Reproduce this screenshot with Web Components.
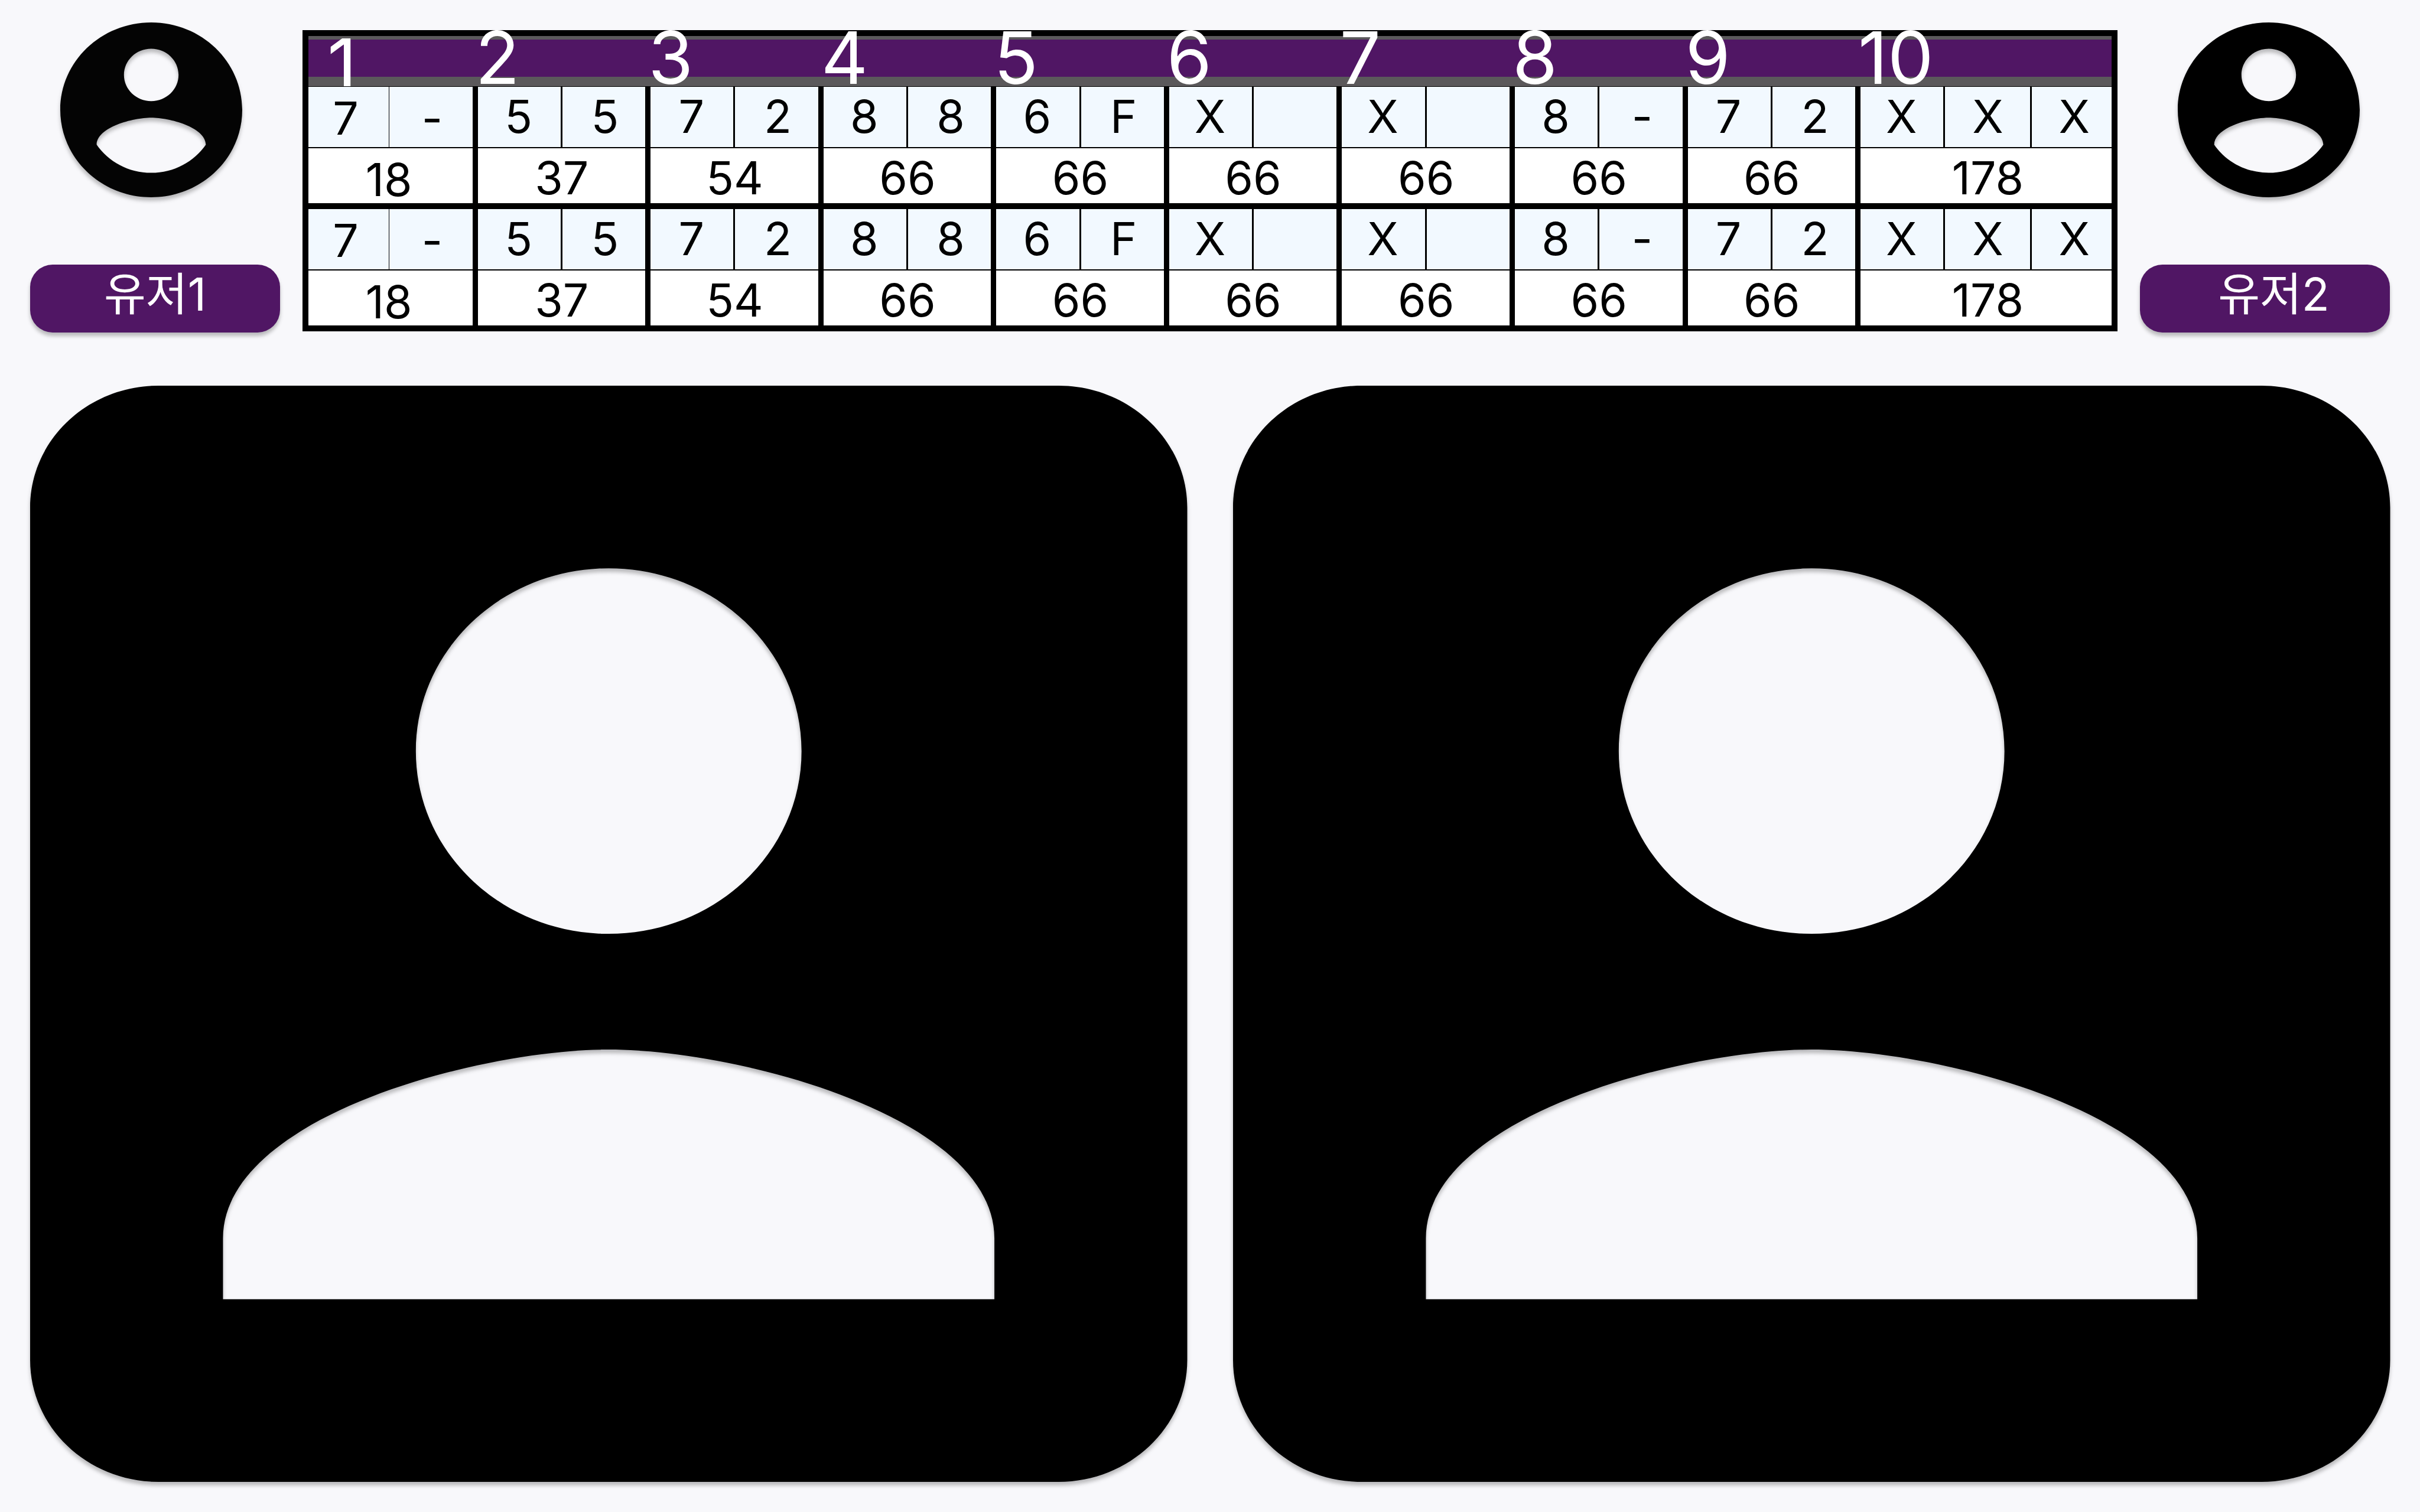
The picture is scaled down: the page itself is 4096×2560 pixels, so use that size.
<!DOCTYPE html>
<html lang="ko">
<head>
<meta charset="utf-8">
<title>볼링 스코어</title>
<style>
html,body{margin:0;background:#f8f8fb}
</style>
</head>
<body>
<bowling-match></bowling-match>
<script>
const define = (name, html, ready) => customElements.define(name, class extends HTMLElement {
  connectedCallback() {
    if (this.shadowRoot) return;
    this.attachShadow({ mode: 'open' }).innerHTML = html;
    if (ready) ready(this, this.shadowRoot);
  }
});

define('user-avatar', `
<style>
:host{display:block;color:#000}
svg{display:block;width:100%;aspect-ratio:384/369;overflow:visible;fill:currentColor;filter:drop-shadow(0 6px 3px rgba(0,0,0,.25))}
</style>
<svg viewBox="2 2 20 20" preserveAspectRatio="none" aria-hidden="true"><path d="M12 2C6.48 2 2 6.48 2 12s4.480 10 10 10 10-4.480 10-10S17.520 2 12 2zm0 3c1.660 0 3 1.340 3 3s-1.340 3-3 3-3-1.340-3-3 1.340-3 3-3zm0 14.200c-2.500 0-4.710-1.280-6-3.220.030-1.990 4-3.080 6-3.080 1.990 0 5.970 1.090 6 3.080-1.290 1.940-3.500 3.220-6 3.220z"/></svg>`);

define('user-photo', `
<style>
:host{display:block;flex:1;min-width:0}
svg{display:block;width:100%;aspect-ratio:2448/2320;overflow:visible;filter:drop-shadow(0 6px 3px rgba(0,0,0,.25))}
</style>
<svg viewBox="3 3 18 18" preserveAspectRatio="none" aria-hidden="true"><path d="M3 5v14c0 1.100.890 2 2 2h14c1.100 0 2-.9 2-2V5c0-1.100-.9-2-2-2H5c-1.110 0-2 .9-2 2zm12 4c0 1.660-1.340 3-3 3s-3-1.340-3-3 1.340-3 3-3 3 1.340 3 3zm-9 8c0-2 4-3.100 6-3.100s6 1.100 6 3.100v1H6v-1z"/></svg>`);

define('name-tag', `
<style>
:host{display:block;box-sizing:border-box;height:115px;border-radius:38px;background:#501664;color:#fff;text-align:center;
font-size:77px;line-height:100px;box-shadow:0 6px 6px rgba(0,0,0,.25)}
</style><slot></slot>`);

define('player-panel', `
<style>
:host{display:flex;flex-direction:column;gap:114px;padding-top:38px}
.avatar{padding:0 102px}
</style>
<div class="avatar"><slot name="avatar"></slot></div><slot></slot>`);

const FRAMES = [['7','-','18'],['5','5','37'],['7','2','54'],['8','8','66'],['6','F','66'],['X','','66'],['X','','66'],['8','-','66'],['7','2','66'],['X','X','X','178']];

define('score-board', `
<style>
:host{display:block;padding-top:51px;min-width:0}
table{width:100%;table-layout:fixed;border-collapse:separate;border-spacing:0;background:#fff;color:#000;position:relative}
table::after{content:"";position:absolute;inset:0;border:10px solid #000;pointer-events:none}
th,td{padding:0;font-weight:400;white-space:nowrap;vertical-align:top}
thead th{height:96px;text-align:left;font-size:123px;color:#fff;
background:linear-gradient(#5b595b 16px,#501664 16px 79px,#5b595b 79px);box-shadow:inset 0 -1px #000}
thead span{display:block;box-sizing:border-box;height:95px;line-height:93px;position:relative;z-index:1}
thead th:first-child span{padding:12px 0 0 42px;overflow:hidden}
td{text-align:center;font-size:77px;line-height:100px}
td.first{padding-top:3px}
.throws td{height:104px;background:#f2f9ff;box-shadow:inset var(--l,1px) 0 #000,inset var(--r,-2px) 0 #000,inset 0 -2px #000}
.totals td{height:103px;box-shadow:inset 4px 0 #000,inset -5px 0 #000,inset 0 -10px #000}
.throws td,.totals td{box-sizing:border-box}
.throws .start{--l:4px}
.throws .end{--r:-5px}
.throws .start.first{--r:0px}
.throws .end.first{--l:1px}
</style>
<table><thead><tr></tr></thead></table>`, (host, root) => {
  const table = root.querySelector('table');
  const head = root.querySelector('thead tr');
  FRAMES.forEach((f, i) => {
    const th = document.createElement('th');
    th.scope = 'col';
    th.colSpan = f.length - 1;
    th.innerHTML = `<span>${i + 1}</span>`;
    head.append(th);
  });
  const cols = document.createElement('colgroup');
  cols.innerHTML = '<col>'.repeat(21);
  table.prepend(cols);
  for (let p = 0; p < 2; p++) {
    const body = document.createElement('tbody');
    let a = '', b = '';
    FRAMES.forEach((f, i) => {
      const n = f.length - 1;
      for (let k = 0; k < n; k++)
        a += `<td class="${k === 0 ? 'start' : ''} ${k === n - 1 ? 'end' : ''} ${i === 0 ? 'first' : ''}">${f[k]}</td>`;
      b += `<td colspan="${n}" class="${i === 0 ? 'first' : ''}">${f[n]}</td>`;
    });
    body.innerHTML = `<tr class="throws">${a}</tr><tr class="totals">${b}</tr>`;
    table.append(body);
  }
});

define('bowling-match', `
<style>
:host{display:block;font-family:Inter,"Noto Sans CJK KR",sans-serif}
header{display:grid;grid-template-columns:1fr 6fr 1fr}
.one{margin:0 38px 0 51px}
.two{margin:0 51px 0 38px;padding-left:30px}
.one-avatar{color:#040404}
main{display:flex;gap:77px;padding:90px 51px 51px}
</style>
<header>
<player-panel><user-avatar slot="avatar" class="one-avatar"></user-avatar><name-tag class="one">유저1</name-tag></player-panel>
<score-board></score-board>
<player-panel><user-avatar slot="avatar"></user-avatar><name-tag class="two">유저2</name-tag></player-panel>
</header>
<main><user-photo></user-photo><user-photo></user-photo></main>`);
</script>
</body>
</html>
